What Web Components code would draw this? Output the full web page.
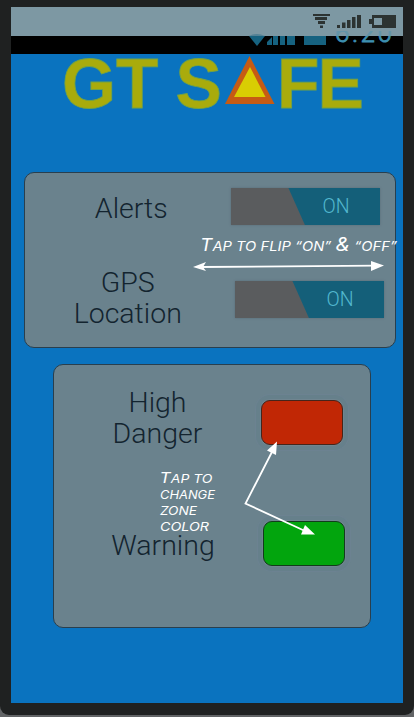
<!DOCTYPE html>
<html lang="en"><head><meta charset="utf-8"><title>GT Safe</title>
<style>body{margin:0;background:#626466;font-family:Roboto,sans-serif;overflow:hidden}</style></head>
<body><gt-phone></gt-phone>
<script>
const define=(name,css,html)=>{
  const t=document.createElement('template');
  t.innerHTML=`<style>*{box-sizing:border-box}svg{display:block;overflow:visible}${css}</style>${html}`;
  customElements.define(name,class extends HTMLElement{
    constructor(){super();this.attachShadow({mode:'open'}).append(t.content.cloneNode(true));}
  });
};
define('status-bar',`:host{display:block;height:47px;background:#000}`,`
<svg width="392" height="47" viewBox="11 7 392 47">
 <defs><clipPath id="c"><rect x="240" y="31" width="163" height="20"/></clipPath></defs>
 <path fill="#7d98a3" d="M11 7H403V36H11Z"/>
 <g clip-path="url(#c)" fill="#166280">
  <path d="M249 36Q257 32 265 36L257 46Z"/>
  <path d="M267 45V42L272 37V45ZM273 45V36H278V45ZM280 45V36H285V45ZM287 45V36H295V45ZM304 36H326V45H304Z"/>
  <text x="335" y="41.5" font-family="Roboto" font-size="26" font-weight="300" fill="#3d8fb0" stroke="#3d8fb0" stroke-width=".9" textLength="57">6:20</text>
 </g>
 <path fill="#7d98a3" opacity=".6" d="M240 30H402V36H240Z"/>
 <g fill="#2c3332"><path d="M313 14H330V16H313ZM315 17H327V20H315ZM318 21H325V24H318ZM320 25.500H323V28H320Z"/>
 <path d="M337 25H340V28H337ZM342 22.500H345.500V28H342ZM347 20H350.500V28H347ZM352 17H355.500V28H352ZM357 15H361V28H357Z"/>
 <path fill-rule="evenodd" d="M372 15H396V28H372V24H369V19H372ZM374 18V25H382V18Z"/></g>
</svg>`);
define('app-logo',`:host{display:block;height:118px}text{font:bold 69.5px "Liberation Sans",Arial,sans-serif}`,`
<svg width="392" height="118" viewBox="11 54 392 118">
 <text y="108" x="62 116 150 175.500" fill="#a9ab0c" stroke="#71a247" stroke-width=".8">GT S</text>
 <path fill="#c65b14" d="M249.500 56L225 104H274.500Z"/><path fill="#d9cd03" d="M250 67L234 97H265.500Z"/>
 <text y="108" x="277 317.500" fill="#a9ab0c" stroke="#71a247" stroke-width=".8">FE</text>
</svg>`);
define('settings-card',`:host{display:grid;align-content:start;background:#6a828d;border:1.5px solid #293f4e;border-radius:10px}`,`<slot></slot>`);
define('setting-row',`:host{display:flex;align-items:flex-start}
.l{font-size:28.5px;font-weight:300;line-height:31px;text-align:center;color:#13242f;white-space:pre-line;width:var(--w);padding-top:var(--p,0);flex:none}`,`<div class="l"><slot></slot></div><slot name="control"></slot>`);
define('toggle-switch',`:host{display:flex;width:149px;height:37px;background:linear-gradient(66deg,#5a5c5e 0 67px,#145f79 68px);box-shadow:0 0 2px #566b76;align-items:center;justify-content:flex-end;padding-right:30px;color:#52b8cf;font-size:19.5px;font-weight:300}`,`<slot></slot>`);
define('zone-color',`:host{display:block;width:82px;height:45px;background:var(--c);border:1.5px solid var(--b);border-radius:9px;box-shadow:0 0 0 1px #708590,0 0 0 5px #66808b,0 0 0 6px #6c8291}`,``);
define('help-notes',`:host{position:absolute;inset:0;pointer-events:none}
text{font-family:Inter,sans-serif;font-style:italic;font-weight:400;fill:#fff}`,`
<svg width="414" height="717" viewBox="0 0 414 717">
 <text x="200" y="250.500" font-size="13" textLength="197" lengthAdjust="spacingAndGlyphs"><tspan font-size="17">T</tspan>AP TO FLIP “ON” <tspan font-size="19">&amp;</tspan> “OFF”</text>
 <g font-size="12"><text x="159.500" y="483" textLength="53" lengthAdjust="spacingAndGlyphs"><tspan font-size="15">T</tspan>AP TO</text>
 <text x="160" y="499" textLength="55" lengthAdjust="spacingAndGlyphs">CHANGE</text>
 <text x="160" y="515" textLength="37" lengthAdjust="spacingAndGlyphs">ZONE</text>
 <text x="160" y="530.500" textLength="49" lengthAdjust="spacingAndGlyphs">COLOR</text></g>
 <g fill="none" stroke="#fff" stroke-width="1.800"><path d="M200 267L376 265.700M273 450L245.500 503.500L305 531"/></g>
 <path fill="#fff" d="M193 267L206 262L203 267L206 271ZM384 265.500L371 261V271ZM277 441.500L267 450.500L276 455ZM315 534.500L305 525L301 534.500Z"/>
</svg>`);
define('gt-phone',`:host{display:block;position:relative;width:414px;height:717px}
.frame{height:715px;background:#1f2121;padding:7px 11px 12px;border-radius:0 0 9px 9px}
.screen{height:696px;background:#0a73bf}
.a{width:372px;height:176px;margin-left:13px;padding-top:14.5px;row-gap:14px}
.b{width:318px;height:264px;margin:16px 0 0 42px;padding-top:21px;row-gap:31px}
toggle-switch,zone-color{flex:none}`,`
<div class="frame"><div class="screen"><status-bar></status-bar><app-logo></app-logo>
<settings-card class="a">
 <setting-row style="--w:205.500px;--p:5px;height:65px"><span style="padding-left:7px">Alerts</span><toggle-switch slot="control">ON</toggle-switch></setting-row>
 <setting-row style="--w:205.500px;height:64px"><span>GPS
Location</span><toggle-switch slot="control" style="margin:14px 0 0 4px">ON</toggle-switch></setting-row>
</settings-card>
<settings-card class="b">
 <setting-row style="--w:207px;--p:1px;height:78px"><span>High
Danger</span><zone-color slot="control" style="--c:#c12705;--b:#45251b;margin-top:14px"></zone-color></setting-row>
 <setting-row style="--w:209px;--p:35px;height:80px"><span style="padding-left:9px">Warning</span><zone-color slot="control" style="--c:#02a50d;--b:#123c1c;margin-top:26px"></zone-color></setting-row>
</settings-card></div></div><help-notes></help-notes>`);
</script></body></html>
